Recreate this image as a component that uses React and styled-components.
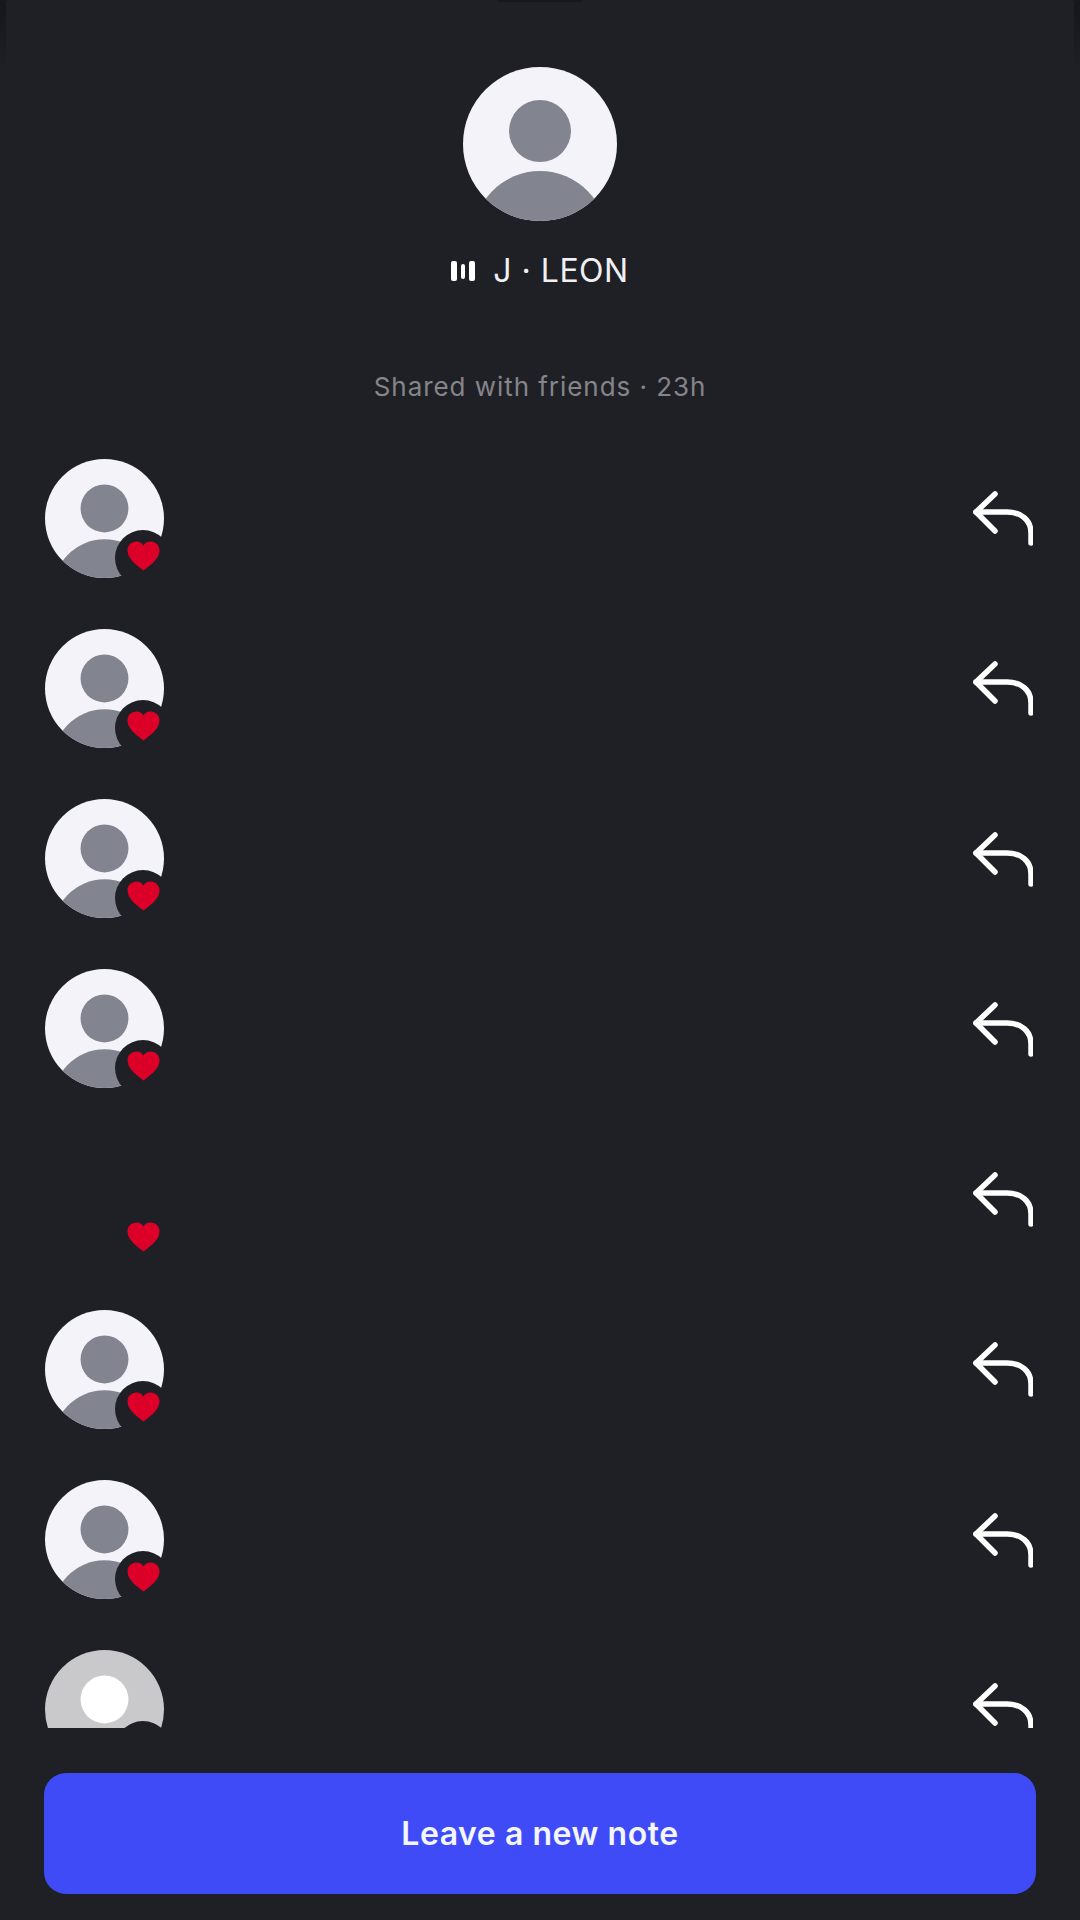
import React from "react";
import styled, { createGlobalStyle } from "styled-components";

const GlobalStyle = createGlobalStyle`
  html, body {
    margin: 0;
    padding: 0;
    background: #16171b;
  }
`;

const Screen = styled.div`
  position: relative;
  width: 1080px;
  height: 1920px;
  background: #1f2025;
  border-radius: 10px 10px 0 0;
  box-sizing: border-box;
  display: flex;
  flex-direction: column;
  overflow: hidden;
  font-family: Inter, "Liberation Sans", sans-serif;
`;

const Notch = styled.div`
  position: absolute;
  top: 0;
  left: 497px;
  width: 86px;
  height: 2px;
  background: #17181d;
`;

const EdgeShade = styled.div`
  position: absolute;
  top: 0;
  ${(props) => props.$side}: 0;
  width: 6px;
  height: 70px;
  background: linear-gradient(#15161b, #1f2025);
`;

const Header = styled.header`
  display: flex;
  flex-direction: column;
  align-items: center;
  padding-top: 67px;
`;

const Name = styled.div`
  display: flex;
  align-items: center;
  margin-top: 32px;
  height: 36px;
  color: #f0f0f3;
  font-size: 32px;
  line-height: 36px;
  font-weight: 400;
  letter-spacing: 0.5px;
`;

const BarsIcon = styled.svg`
  width: 25px;
  height: 24px;
  margin-right: 17px;
`;

const Shared = styled.div`
  margin-top: 81px;
  height: 34px;
  color: #85858b;
  font-size: 26px;
  line-height: 34px;
  letter-spacing: 0.95px;
`;

const List = styled.div`
  margin-top: 29px;
  height: 1295px;
  overflow: hidden;
  flex-shrink: 0;
`;

const Row = styled.div`
  display: flex;
  align-items: center;
  justify-content: space-between;
  height: 170.25px;
  padding: 0 47px 0 45px;
`;

const AvatarWrap = styled.div`
  position: relative;
  width: 119px;
  height: 119px;
`;

const AvatarSvg = styled.svg`
  display: block;
  width: ${(props) => props.$size}px;
  height: ${(props) => props.$size}px;
`;

const Badge = styled.div`
  position: absolute;
  left: 70px;
  top: 71px;
  width: 56px;
  height: 56px;
  border-radius: 50%;
  background: ${(props) => (props.$hidden ? "transparent" : "#1f2025")};
  display: flex;
  align-items: center;
  justify-content: center;
`;

const Heart = styled.svg`
  width: 33px;
  height: 30px;
  margin-bottom: 4px;
`;

const ReplyIcon = styled.svg`
  width: 62px;
  height: 56px;
  display: block;
`;

const Footer = styled.div`
  padding: 45px 44px 0;
`;

const NoteButton = styled.button`
  width: 100%;
  height: 121px;
  border: none;
  border-radius: 22px;
  background: #404bf8;
  color: #f4f6ff;
  font-family: inherit;
  font-size: 32px;
  font-weight: 600;
  letter-spacing: 0.55px;
`;

const Avatar = ({ size, faded }) => (
  <AvatarSvg $size={size} viewBox="0 0 154 154">
    <defs>
      <clipPath id="disc">
        <circle cx="77" cy="77" r="77" />
      </clipPath>
    </defs>
    <circle cx="77" cy="77" r="77" fill={faded ? "#c9c9cc" : "#f4f3fa"} />
    <circle cx="77" cy="64" r="31" fill={faded ? "#ffffff" : "#82848f"} />
    <ellipse
      cx="77"
      cy="174"
      rx="68"
      ry="70"
      fill={faded ? "#ffffff" : "#82848f"}
      clipPath="url(#disc)"
    />
  </AvatarSvg>
);

const HeartBadge = ({ hidden }) => (
  <Badge $hidden={hidden}>
    <Heart viewBox="0 0 33 30">
      <path
        d="M16.5 29.5 C11 25 0.5 18.5 0.5 9.5 C0.5 4 4.5 0.5 9.5 0.5 C12.5 0.5 15 2 16.5 4.5 C18 2 20.5 0.5 23.5 0.5 C28.5 0.5 32.5 4 32.5 9.5 C32.5 18.5 22 25 16.5 29.5 Z"
        fill="#dc0029"
      />
    </Heart>
  </Badge>
);

const Reply = () => (
  <ReplyIcon viewBox="0 0 62 56" fill="none" stroke="#ffffff" strokeWidth="5.5" strokeLinecap="round" strokeLinejoin="round">
    <path d="M24 4 L5 22 L24 41" />
    <path d="M5 22 H36 C50 22 60 30 60 43 V53" />
  </ReplyIcon>
);

const rows = [
  { kind: "full" },
  { kind: "full" },
  { kind: "full" },
  { kind: "full" },
  { kind: "empty" },
  { kind: "full" },
  { kind: "full" },
  { kind: "faded" },
];

const App = () => {
  return (
    <>
      <GlobalStyle />
      <Screen>
        <Notch />
        <EdgeShade $side="left" />
        <EdgeShade $side="right" />
        <Header>
          <Avatar size={154} />
          <Name>
            <BarsIcon viewBox="0 0 25 24" fill="#ffffff">
              <rect x="0" y="2" width="6" height="20" rx="2" />
              <rect x="10" y="5" width="4" height="15" rx="2" />
              <rect x="18" y="2" width="6" height="20" rx="2" />
            </BarsIcon>
            J · LEON
          </Name>
          <Shared>Shared with friends · 23h</Shared>
        </Header>
        <List>
          {rows.map((row, i) => (
            <Row key={i}>
              <AvatarWrap>
                {row.kind !== "empty" && <Avatar size={119} faded={row.kind === "faded"} />}
                <HeartBadge hidden={row.kind === "empty"} />
              </AvatarWrap>
              <Reply />
            </Row>
          ))}
        </List>
        <Footer>
          <NoteButton>Leave a new note</NoteButton>
        </Footer>
      </Screen>
    </>
  );
};

export default App;
